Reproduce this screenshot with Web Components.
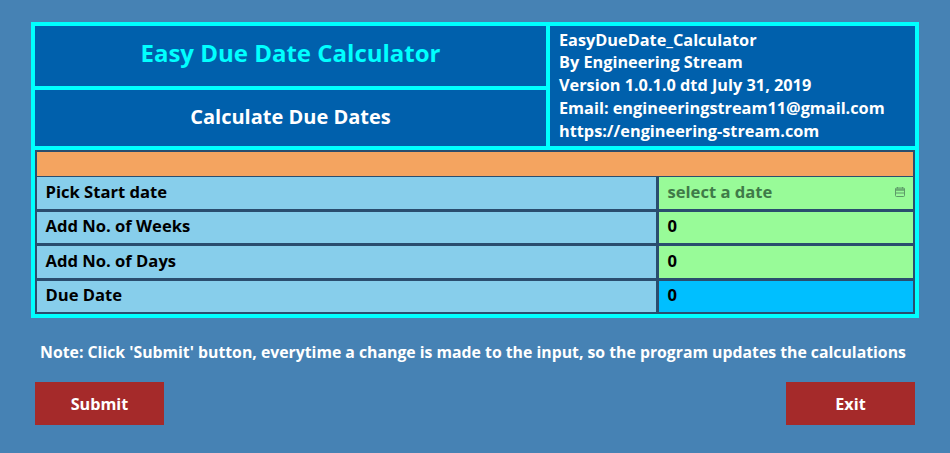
<!DOCTYPE html>
<html><head><meta charset="utf-8"><style>
html,body{margin:0;height:100%;overflow:hidden}
body{background:#4682b4;font-family:"Open Sans","Noto Sans",sans-serif;font-weight:700}
</style></head><body>
<due-app></due-app>
<script>
const def=(n,css,html,init)=>customElements.define(n,class extends HTMLElement{constructor(){super();this.attachShadow({mode:'open'}).innerHTML=`<style>${css}</style>${html}`;}connectedCallback(){init&&init(this)}});
def('due-header',`:host{display:grid;grid-template-columns:511px 365px;grid-template-rows:60px 56px;gap:4px;background:#0ff;padding-bottom:4px}
.c{background:#0060ac;color:#fff;display:flex;align-items:center;justify-content:center}
.t{color:#0ff;font-size:24px;padding-bottom:8px;box-sizing:border-box}.s{font-size:20px;padding-bottom:3px;box-sizing:border-box}
.i{grid-column:2;grid-row:1/3;justify-content:flex-start;font-size:16.3px;line-height:22.7px;padding:0 0 1px 9px}`,
`<div class="c t">Easy Due Date Calculator</div><div class="c i"><div>EasyDueDate_Calculator<br>By Engineering Stream<br>Version 1.0.1.0 dtd July 31, 2019<br>Email: engineeringstream11@gmail.com<br>https://engineering-stream.com</div></div><div class="c s">Calculate Due Dates</div>`);
def('due-row',`:host{display:grid;grid-template-columns:619px 254px;gap:3px;height:31.5px}
.l,.v{display:flex;align-items:center;padding:0 0 3px 8.5px;font-size:16.6px;color:#000;justify-content:space-between}
.l{background:#87ceeb}.v{background:var(--bg,#98fb98);color:var(--fg,#000);padding-right:8px}svg{width:10px;height:10px;margin-top:2px;display:var(--ic,none)}`,
`<div class="l"><slot name="l"></slot></div><div class="v"><slot></slot><svg viewBox="0 0 10 10" fill="none" stroke="#5d9a68" stroke-width="1"><rect x=".5" y="1" width="9" height="8.5" rx="1"/><path d="M.5 3.2h9M.5 2.2h9M.5 6h9"/><path d="M2.5 0v1.5M7.5 0v1.5"/></svg></div>`);
def('due-table',`:host{display:flex;flex-direction:column;gap:3px;background:#2a4d6e;padding:1.5px 2px 2px}
.o{height:24.5px;background:#f4a460;margin-bottom:-2px}`,`<div class="o"></div><slot></slot>`);
def('due-btn',`:host{display:flex;align-items:center;justify-content:center;width:129px;height:43px;background:#a52a2a;color:#fff;font-size:16.2px}`,`<slot></slot>`);
def('due-app',`:host{display:block;padding:22px 31px 0}
.f{border:4px solid #0ff;width:880px}
.n{color:#fff;font-size:15.8px;text-align:center;margin:24px 0 0;line-height:21px;white-space:nowrap;width:884px}
.b{display:flex;justify-content:space-between;margin:19px 4px 0 4px;width:880px}`,
`<div class="f"><due-header></due-header><due-table>
<due-row><span slot="l">Pick Start date</span></due-row>
<due-row><span slot="l">Add No. of Weeks</span>0</due-row>
<due-row><span slot="l">Add No. of Days</span>0</due-row>
<due-row><span slot="l">Due Date</span>0</due-row>
</due-table></div>
<div class="n">Note: Click 'Submit' button, everytime a change is made to the input, so the program updates the calculations</div>
<div class="b"><due-btn>Submit</due-btn><due-btn>Exit</due-btn></div>`,
el=>{const r=el.shadowRoot.querySelectorAll('due-row');
r[0].style.cssText='--fg:#3f7a48;--ic:block';r[0].appendChild(document.createTextNode('select a date'));
r[3].style.setProperty('--bg','#00bfff');});
</script></body></html>
